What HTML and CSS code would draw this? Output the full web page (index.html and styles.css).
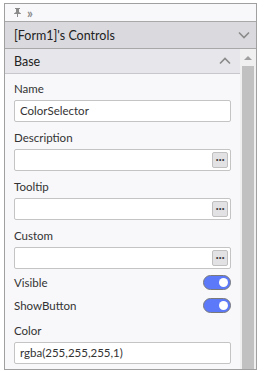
FILE: index.html
```html
<!DOCTYPE html>
<html>
<head>
    <link rel="stylesheet" href="styles.css">
</head>
<body>
    <div class="panel">
        <div class="toolbar">
            <svg class="pin" width="9" height="9" viewBox="0 0 9 9"><path d="M2 0h5v1H6v3l2 1.5V6H5v3H4V6H1V5.5L3 4V1H2z" fill="#8a8a8a"/></svg>
            <span class="dock">&raquo;</span>
        </div>
        <div class="title">
            <span>[Form1]'s Controls</span>
            <svg width="12" height="8" viewBox="0 0 12 8"><path d="M1 1.5l5 5 5-5" fill="none" stroke="#8a8a8a" stroke-width="1.6"/></svg>
        </div>
        <div class="body">
            <div class="content">
                <div class="group">
                    <span>Base</span>
                    <svg width="12" height="8" viewBox="0 0 12 8"><path d="M1 6.5l5-5 5 5" fill="none" stroke="#8a8a8a" stroke-width="1.6"/></svg>
                </div>
                <div class="props">
                    <div class="field">
                        <label>Name</label>
                        <div class="input">ColorSelector</div>
                    </div>
                    <div class="field">
                        <label>Description</label>
                        <div class="input"><button class="more">&middot;&middot;&middot;</button></div>
                    </div>
                    <div class="field">
                        <label>Tooltip</label>
                        <div class="input"><button class="more">&middot;&middot;&middot;</button></div>
                    </div>
                    <div class="field">
                        <label>Custom</label>
                        <div class="input"><button class="more">&middot;&middot;&middot;</button></div>
                    </div>
                    <div class="switches">
                        <div class="switch-row">
                            <label>Visible</label>
                            <span class="toggle"></span>
                        </div>
                        <div class="switch-row">
                            <label>ShowButton</label>
                            <span class="toggle"></span>
                        </div>
                    </div>
                    <div class="field">
                        <label>Color</label>
                        <div class="input">rgba(255,255,255,1)</div>
                    </div>
                </div>
            </div>
            <div class="scrollbar">
                <div class="arrow"></div>
                <div class="thumb"></div>
            </div>
        </div>
    </div>
</body>
</html>
```

FILE: styles.css
```css
body {
    margin: 0;
    background-color: #fff;
    font-family: Lato, "Noto Sans", sans-serif;
    font-size: 11.5px;
    color: #333;
}
.panel {
    margin: 3px 0 0 4px;
    width: 251px;
    height: 365px;
    border: 1px solid #a0a0a0;
    background-color: #f8f8fa;
    display: flex;
    flex-direction: column;
    overflow: hidden;
}
.toolbar {
    height: 17px;
    display: flex;
    align-items: center;
    gap: 5px;
    padding-left: 8px;
}
.dock {
    color: #8a8a8a;
    font-size: 13px;
    font-weight: bold;
    line-height: 8px;
}
.title {
    height: 26px;
    background-color: #dadade;
    border-top: 1px solid #a8a8a8;
    border-bottom: 1px solid #a8a8a8;
    display: flex;
    align-items: center;
    justify-content: space-between;
    padding: 0 6px 0 9px;
    font-size: 12.5px;
    color: #222;
}
.body {
    flex: 1;
    display: flex;
    min-height: 0;
}
.content {
    flex: 1;
    min-width: 0;
}
.group {
    height: 24px;
    background-color: #e7e7eb;
    border-bottom: 1px solid #c8c8cc;
    display: flex;
    align-items: center;
    justify-content: space-between;
    padding: 0 9px;
    font-size: 12.5px;
    color: #222;
}
.props {
    padding: 4px 9px 0 9px;
}
.field label, .switch-row label {
    display: block;
    height: 22px;
    line-height: 22px;
}
.field {
    margin-bottom: 5px;
}
.input {
    height: 20px;
    border: 1px solid #c4c4c4;
    border-radius: 2px;
    background-color: #fff;
    line-height: 20px;
    padding-left: 5px;
    padding-right: 2px;
    display: flex;
    align-items: center;
    justify-content: flex-end;
}
.input:not(:has(.more)) {
    justify-content: flex-start;
}
.more {
    width: 16px;
    height: 16px;
    padding: 0;
    border: 1px solid #c0c0c0;
    border-radius: 2px;
    background-color: #e2e2e4;
    color: #444;
    font-size: 12px;
    font-weight: bold;
    line-height: 12px;
    letter-spacing: -1px;
}
.switches {
    margin-top: -3px;
    margin-bottom: 3px;
}
.switch-row {
    display: flex;
    justify-content: space-between;
    align-items: center;
    height: 23px;
}
.toggle {
    width: 26px;
    height: 13px;
    border: 1px solid #7a7a7a;
    border-radius: 8px;
    background-color: #5c79f9;
    position: relative;
}
.toggle::after {
    content: "";
    position: absolute;
    right: 2px;
    top: 2px;
    width: 9px;
    height: 9px;
    border-radius: 50%;
    background-color: #fff;
}
.scrollbar {
    width: 16px;
    background-color: #f0f0f0;
    display: flex;
    flex-direction: column;
    align-items: center;
}
.arrow {
    margin-top: 7px;
    width: 0;
    height: 0;
    border-left: 4px solid transparent;
    border-right: 4px solid transparent;
    border-bottom: 4px solid #a0a0a0;
}
.thumb {
    margin-top: 6px;
    width: 12px;
    flex: 1;
    background-color: #c1c1c1;
}
```
